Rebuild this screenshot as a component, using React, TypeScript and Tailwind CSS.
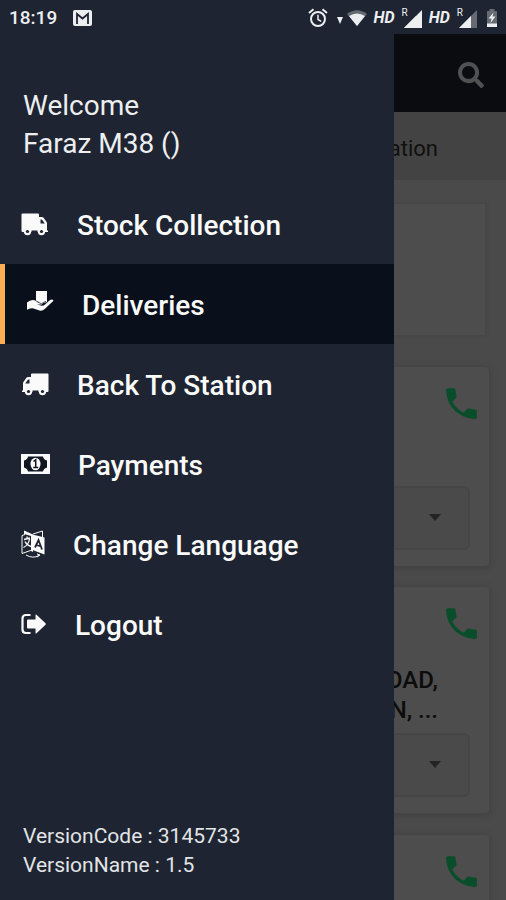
import type { ReactNode } from 'react';
import { clsx } from 'clsx';
import { FaSearch } from 'react-icons/fa';

function TruckIcon({ flipped }: { flipped?: boolean }) {
  return (
    <svg viewBox="0 0 28 24" className={clsx('h-6 w-7', flipped && '-scale-x-100')} fill="currentColor" aria-hidden="true">
      <path
        fillRule="evenodd"
        d="M1.500 1.500H17q1 0 1 1V5h3q.8 0 1.400.6l3 4.200q.6.700.6 1.500V18.500h1V20H1.500q-1 0-1-1V2.500q0-1 1-1zM19.500 7.500v4h4.300l-2.500-3.500q-.3-.5-.8-.5z"
      />
      <circle cx="6.500" cy="19.500" r="3.700" />
      <circle cx="20.500" cy="19.500" r="3.700" />
      <path d="M10.500 18.500h6v2h-6z" className="fill-[#1e2431]" />
      <circle cx="6.500" cy="19.500" r="1.600" className="fill-[#1e2431]" />
      <circle cx="20.500" cy="19.500" r="1.600" className="fill-[#1e2431]" />
    </svg>
  );
}

function HandBoxIcon() {
  return (
    <svg viewBox="0 0 28 28" className="size-7" fill="currentColor" aria-hidden="true">
      <path d="M10 1h11v11l-5 1.500-6-3z" />
      <path d="M1 12.500q3.500-3.300 7.500-2.300l4 1.800h3.500q1.800 1.500-.5 2.500h-4.500l5 1.200q1.700 0 3-1.200l5-4.500q2.500-1.300 3.500.8l-8.500 8q-2.500 2.400-5.500 1.800l-6-2.200q-2.500-.5-6.500 1.300z" />
      <path d="M10.500 11.500l5 2.200 4.500-2.500" className="fill-none stroke-[#4b505b]" />
    </svg>
  );
}

function MoneyIcon() {
  return (
    <svg viewBox="0 0 29 20" className="h-5 w-[29px]" aria-hidden="true">
      <rect width="29" height="20" fill="currentColor" />
      <path d="M7 2.500h15q.5 3 4 4v7q-3.500 1-4 4h-15q-.5-3-4-4v-7q3.500-1 4-4z" className="fill-[#101622]" />
      <ellipse cx="14.500" cy="10" rx="5" ry="6.300" fill="currentColor" />
      <path d="M12.500 7.500l2.200-1.700v7.700M12.200 13.500h5" className="fill-none stroke-[#101622]" strokeWidth="1.500" />
    </svg>
  );
}

function LanguageIcon() {
  return (
    <svg viewBox="0 0 24 28" className="h-7 w-6" fill="none" stroke="currentColor" aria-hidden="true">
      <path d="M3 .5l9 4v17.500l-2-1V6L3 4z" fill="currentColor" stroke="none" />
      <path d="M11.500 4.500L23.500 7.500v17L11.500 20z" fill="currentColor" stroke="none" />
      <path d="M12 4L21.500 1v6M1 5.500v18l10-3.500M1 5.500l3-1M5 25q7 4 13 .5M16 27l3-2-3-1" />
      <path d="M3 9.500l6-1.500M6 6.500v2.500M8.500 9q-1 6-6 8.500M4 11.500q2 4 6 5" strokeWidth="1.300" />
      <path d="M14 17.500l3.500-7.500 3.500 9.500M15.200 15l5 1.500" className="stroke-[#1e2431]" strokeWidth="1.800" />
    </svg>
  );
}

function LogoutIcon() {
  return (
    <svg viewBox="0 0 26 22" className="h-[22px] w-[26px]" aria-hidden="true">
      <path d="M9.500 2H5Q1.500 2 1.500 5.500v11Q1.500 20 5 20h4.500" fill="none" stroke="currentColor" strokeWidth="2.200" />
      <path d="M7 6.500h7.500V2q0-1 1-.3l9 8.500q.8.800 0 1.600l-9 8.500q-1 .7-1-.3v-4.500H7q-1 0-1-1v-7q0-1 1-1z" fill="currentColor" />
    </svg>
  );
}

function PhoneIcon() {
  return (
    <svg viewBox="0 0 24 24" className="size-[41px]" fill="currentColor" aria-hidden="true">
      <path d="M6.620 10.790c1.440 2.830 3.760 5.140 6.590 6.590l2.200-2.200c.27-.27.67-.36 1.020-.24 1.120.37 2.330.57 3.570.57.55 0 1 .45 1 1V20c0 .55-.45 1-1 1-9.390 0-17-7.610-17-17 0-.55.45-1 1-1h3.500c.55 0 1 .45 1 1 0 1.250.2 2.450.57 3.570.11.35.03.74-.25 1.020l-2.200 2.200z" />
    </svg>
  );
}

function AlarmIcon() {
  return (
    <svg viewBox="0 0 20 20" className="size-5" fill="none" stroke="currentColor" aria-hidden="true">
      <circle cx="10" cy="11" r="7" strokeWidth="2" />
      <path d="M1 5l4.500-3.700M19 5l-4.500-3.700" strokeWidth="2" />
      <path d="M10 6.800v4.700l3.200 1.800" strokeWidth="1.500" />
    </svg>
  );
}

function WifiIcon() {
  return (
    <svg viewBox="0 0 20 16" className="h-4 w-5" fill="currentColor" aria-hidden="true">
      <path d="M0 4Q10-3.500 20 4L10 16z" opacity=".35" />
      <path d="M2 6Q10 1 18 6L10 16z" />
    </svg>
  );
}

function SignalIcon({ weak }: { weak?: boolean }) {
  return (
    <span className="flex items-start">
      <span className="text-[10px] leading-[10px]">R</span>
      <svg viewBox="0 0 18 18" className="-ml-1 mt-0.5 size-[18px]" fill="currentColor" aria-hidden="true">
        <path d="M18 0v18H0z" opacity={weak ? 0.35 : 1} />
        <path d="M12 6v12H0z" />
      </svg>
    </span>
  );
}

function BatteryIcon() {
  return (
    <svg viewBox="0 0 12 18" className="h-[18px] w-3" fill="currentColor" aria-hidden="true">
      <path d="M3.500 0h5v2H11v16H1V2h2.500z" opacity=".35" />
      <path d="M1 14.500h10V18H1zM7.500 3.500L2.500 9.500h3l-1 4.500 5-6.500h-3z" />
    </svg>
  );
}

function StatusBar() {
  return (
    <div className="relative z-20 flex h-[34px] shrink-0 items-center justify-between bg-[#1e2431] pt-0.5 pr-2 pl-[9px] text-[#eceef0]">
      <div className="flex items-center gap-4">
        <span className="text-[19px] font-medium">18:19</span>
        <svg viewBox="0 0 19 16" className="h-4 w-[19px]" aria-hidden="true">
          <rect width="19" height="16" rx="2" fill="currentColor" />
          <path d="M4 14V4l5.500 4.500L15 4v10" className="fill-none stroke-[#1e2431]" strokeWidth="1.800" />
        </svg>
      </div>
      <div className="flex items-center gap-[7px]">
        <AlarmIcon />
        <span className="flex items-center gap-1">
          <svg viewBox="0 0 6 7" className="mt-1 ml-0.5 h-[7px] w-1.5" fill="currentColor" aria-hidden="true">
            <path d="M0 0h6L3 7z" />
          </svg>
          <WifiIcon />
        </span>
        <span className="text-base font-bold italic">HD</span>
        <SignalIcon />
        <span className="text-base font-bold italic">HD</span>
        <SignalIcon weak />
        <span className="ml-0.5 flex">
          <BatteryIcon />
        </span>
      </div>
    </div>
  );
}

const menu = [
  { label: 'Stock Collection', icon: <TruckIcon /> },
  { label: 'Deliveries', icon: <HandBoxIcon />, active: true },
  { label: 'Back To Station', icon: <TruckIcon flipped /> },
  { label: 'Payments', icon: <MoneyIcon /> },
  { label: 'Change Language', icon: <LanguageIcon /> },
  { label: 'Logout', icon: <LogoutIcon /> },
];

function Drawer() {
  return (
    <aside className="absolute inset-y-0 right-28 left-0 z-10 flex flex-col bg-[#1e2431] pt-[87px] text-[#fafafa]">
      <p className="px-[23px] text-[28px] leading-[38px] text-[#eceef0]">
        Welcome
        <br />
        Faraz M38 ()
      </p>
      <nav className="mt-[21px] flex flex-col">
        {menu.map(({ label, icon, active }) => (
          <a
            key={label}
            href="#"
            className={clsx(
              'flex h-20 items-center gap-7 pl-[21px] text-[28px] font-medium',
              active && 'border-l-[5px] border-[#fbae51] bg-[#0a101b]'
            )}
          >
            {icon}
            <span className="pt-1">{label}</span>
          </a>
        ))}
      </nav>
      <p className="mt-auto px-[23px] pb-5 text-[21px] leading-[29px] text-[#e2e4e6]">
        VersionCode : 3145733
        <br />
        VersionName : 1.5
      </p>
    </aside>
  );
}

function StatusSelect() {
  return (
    <div className="relative">
      <select
        aria-label="Delivery status"
        className="block h-16 w-full appearance-none rounded-md border-2 border-[#464646] bg-[#4a4a4a]"
      />
      <svg viewBox="0 0 12 7" className="pointer-events-none absolute top-7 right-[29px] h-[7px] w-3" aria-hidden="true">
        <path d="M0 0h12L6 7z" className="fill-[#242424]" />
      </svg>
    </div>
  );
}

function DeliveryCard({ children, className }: { children?: ReactNode; className?: string }) {
  return (
    <section
      className={clsx(
        'flex flex-col justify-between rounded-sm bg-[#4d4d4d] px-[19px] pt-4 pb-4 shadow-[0_1px_5px_2px_#434343]',
        className
      )}
    >
      <button type="button" aria-label="Call" className="-mr-3 self-end text-[#094d2a]">
        <PhoneIcon />
      </button>
      {children}
    </section>
  );
}

export default function App() {
  return (
    <div className="relative flex h-screen flex-col overflow-hidden bg-[#4a4a4a] font-['Roboto',sans-serif]">
      <StatusBar />
      <header className="flex h-[78px] shrink-0 items-center justify-end bg-[#0a0c10] pt-1 pr-[22px]">
        <button type="button" aria-label="Search" className="text-[#505152]">
          <FaSearch className="size-[26px]" />
        </button>
      </header>
      <div className="flex h-[68px] shrink-0 items-center justify-end bg-[#434343] pt-1 pr-[68px] text-[22px] text-[#101010]">
        ation
      </div>
      <main className="flex flex-1 flex-col px-[17px] pt-6">
        <div className="mr-1 h-[131px] shrink-0 bg-[#4d4d4d] shadow-[0_0_2px_2px_#474747]" />
        <DeliveryCard className="mt-8 h-[199px] shrink-0">
          <StatusSelect />
        </DeliveryCard>
        <DeliveryCard className="mt-[21px] h-[226px] shrink-0">
          <div className="flex flex-col gap-2">
            <p className="flex flex-col items-end pr-8 text-2xl leading-[30px] font-medium text-[#0c0c0c]">
              <span>OAD,</span>
              <span>N, ...</span>
            </p>
            <StatusSelect />
          </div>
        </DeliveryCard>
        <DeliveryCard className="mt-[22px] flex-1" />
      </main>
      <Drawer />
    </div>
  );
}
